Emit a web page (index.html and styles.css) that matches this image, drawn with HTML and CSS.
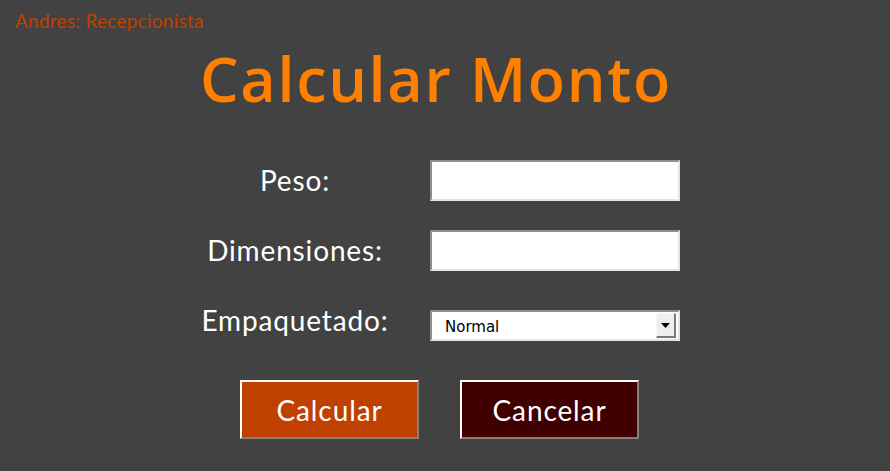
FILE: index.html
```html
<!DOCTYPE html>
<html lang="es">
<head>
<meta charset="utf-8">
<title>Calcular Monto</title>
<link rel="stylesheet" href="styles.css">
</head>
<body>
  <div class="user">Andres: Recepcionista</div>
  <h1 class="title">Calcular Monto</h1>
  <form class="form">
    <div class="row">
      <label class="label" for="peso">Peso:</label>
      <input class="field" id="peso" type="text">
    </div>
    <div class="row">
      <label class="label" for="dim">Dimensiones:</label>
      <input class="field" id="dim" type="text">
    </div>
    <div class="row row-select">
      <label class="label" for="emp">Empaquetado:</label>
      <div class="select-wrap">
        <select class="select" id="emp">
          <option>Normal</option>
        </select>
        <span class="arrow"><svg width="9" height="5" viewBox="0 0 9 5"><path d="M0 0H9L4.5 5Z" fill="#000"/></svg></span>
      </div>
    </div>
    <div class="buttons">
      <button type="button" class="btn btn-calc">Calcular</button>
      <button type="button" class="btn btn-cancel">Cancelar</button>
    </div>
  </form>
</body>
</html>
```
FILE: styles.css
```css
html, body {
  margin: 0;
  padding: 0;
  background: #424242;
  height: 100%;
}
body {
  font-family: "Open Sans", "Lato", sans-serif;
  overflow: hidden;
}
.user {
  padding: 10px 0 0 15px;
  height: 22px;
  font-family: "Lato", sans-serif;
  font-size: 19px;
  letter-spacing: 0.25px;
  line-height: 22px;
  color: #c04000;
}
.title {
  margin: 12px 0 0 0;
  padding-left: 200px;
  font-family: "Open Sans", sans-serif;
  font-weight: 600;
  font-size: 61px;
  line-height: 70px;
  color: #ff8000;
  letter-spacing: 1.7px;
}
.form {
  margin: 46px 0 0 190px;
  display: flex;
  flex-direction: column;
  gap: 29px;
  width: 490px;
}
.row {
  display: grid;
  grid-template-columns: 210px 250px;
  column-gap: 30px;
  height: 41px;
  align-items: center;
}
.label {
  text-align: center;
  font-family: "Lato", sans-serif;
  font-size: 28px;
  letter-spacing: 0.85px;
  color: #ffffff;
  line-height: 41px;
}
.field {
  box-sizing: border-box;
  width: 250px;
  height: 41px;
  margin: 0;
  background: #fff;
  border-style: solid;
  border-width: 2px;
  border-color: #8e8e8e #e4e4e4 #e4e4e4 #8e8e8e;
  outline: none;
}
.select-wrap {
  position: relative;
  align-self: end;
  width: 250px;
  height: 31px;
}
.select {
  appearance: none;
  -webkit-appearance: none;
  box-sizing: border-box;
  width: 250px;
  height: 31px;
  margin: 0;
  padding: 2px 0 0 13px;
  background: #fff;
  border-style: solid;
  border-width: 2px;
  border-color: #8e8e8e #e4e4e4 #e4e4e4 #8e8e8e;
  border-radius: 0;
  font-family: "DejaVu Sans", sans-serif;
  font-size: 15px;
  color: #000;
  outline: none;
}
.arrow {
  position: absolute;
  right: 4px;
  top: 3px;
  box-sizing: border-box;
  width: 20px;
  height: 25px;
  background: #efefef;
  border-style: solid;
  border-width: 1px 2px 2px 1px;
  border-color: #f8f8f8 #7a7a7a #7a7a7a #f8f8f8;
  display: flex;
  align-items: center;
  justify-content: center;
  pointer-events: none;
}
.buttons {
  display: flex;
  gap: 41px;
  margin: 10px 0 0 50px;
}
.btn {
  box-sizing: border-box;
  width: 179px;
  height: 59px;
  margin: 0;
  padding: 0;
  border-style: solid;
  border-width: 2px;
  border-color: #ffffff #808080 #808080 #ffffff;
  font-family: "Lato", sans-serif;
  font-size: 28px;
  letter-spacing: 0.9px;
  color: #fff;
  cursor: pointer;
}
.btn-calc {
  background: #c04000;
}
.btn-cancel {
  background: #400000;
}
```
